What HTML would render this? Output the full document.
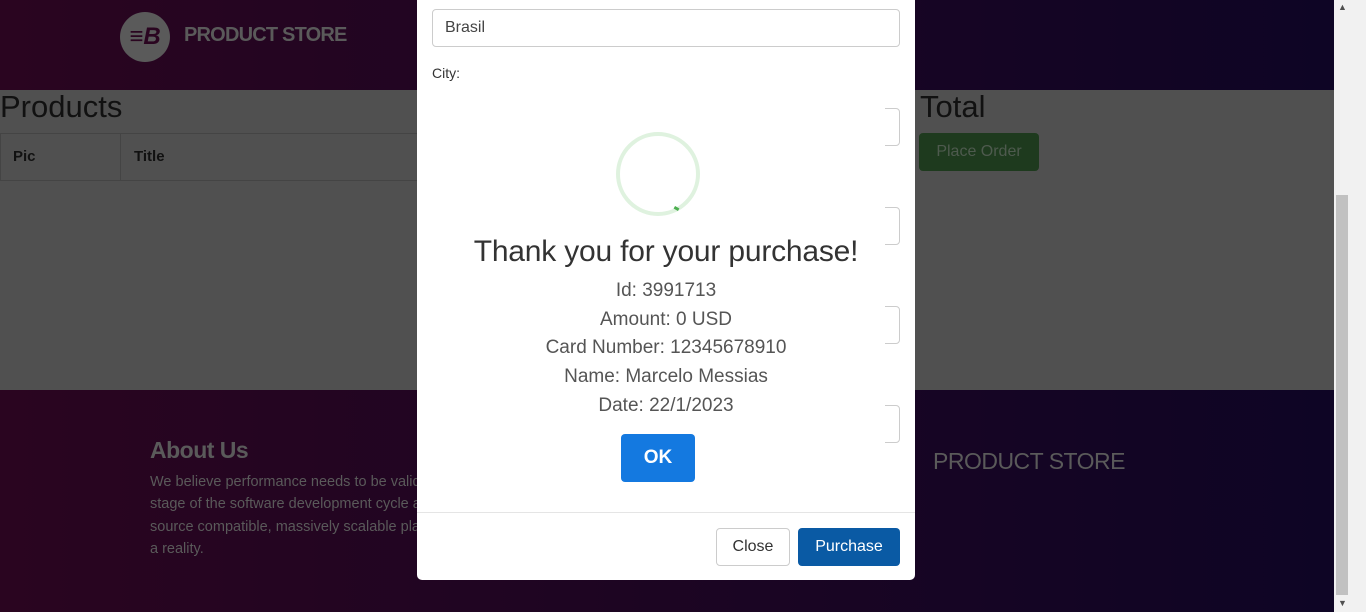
<!DOCTYPE html>
<html><head><style>
*{box-sizing:border-box;margin:0;padding:0}
body{width:1366px;height:612px;overflow:hidden;position:relative;font-family:"Liberation Sans",sans-serif;background:#505050}
.abs{position:absolute}
.hdr{left:0;top:0;width:1334px;height:90px;background:linear-gradient(90deg,#2a0520,#0e0525)}
.ftr{left:0;top:390px;width:1334px;height:222px;background:linear-gradient(90deg,#2a0520,#0e0525)}
.g{color:#5a5a5a}
.inp{border:1px solid #ccc;border-radius:4px;background:#fff}
</style></head><body>
<div class="abs hdr"></div>
<div class="abs" style="left:120px;top:12px;width:50px;height:50px;border-radius:50%;background:#5a5a5a;color:#2a0520;font:italic bold 24px 'Liberation Sans';text-align:center;line-height:50px">&#8801;B</div>
<div class="abs g" style="left:184px;top:24px;font-weight:bold;font-size:20px;letter-spacing:-0.8px">PRODUCT STORE</div>
<div class="abs" style="left:0;top:89px;font-size:31px;color:#111">Products</div>
<div class="abs" style="left:0;top:133px;width:420px;height:48px;border:1px solid #444;border-right:none"></div>
<div class="abs" style="left:120px;top:133px;width:1px;height:48px;background:#444"></div>
<div class="abs" style="left:13px;top:148px;font-size:15px;font-weight:bold;color:#111">Pic</div>
<div class="abs" style="left:134px;top:148px;font-size:15px;font-weight:bold;color:#111">Title</div>
<div class="abs" style="left:920px;top:89px;font-size:31px;color:#111">Total</div>
<div class="abs" style="left:919px;top:133px;width:120px;height:38px;background:#1e3a1e;border-radius:4px;color:#4e5a4e;font-size:16px;text-align:center;line-height:38px">Place Order</div>
<div class="abs ftr"></div>
<div class="abs g" style="left:150px;top:437px;font-size:23px;font-weight:bold;letter-spacing:-0.5px">About Us</div>
<div class="abs g" style="left:150px;top:471px;font-size:14.5px;line-height:22.3px;width:300px;white-space:nowrap">We believe performance needs to be validated<br>stage of the software development cycle and<br>source compatible, massively scalable platform<br>a reality.</div>
<div class="abs g" style="left:933px;top:448px;font-size:23px;letter-spacing:-0.5px">PRODUCT STORE</div>
<div class="abs" style="left:417px;top:0;width:498px;height:580px;background:#fff;border-radius:0 0 5px 5px"></div>
<div class="abs inp" style="left:432px;top:9px;width:468px;height:38px"></div>
<div class="abs" style="left:445px;top:19px;font-size:16px;color:#444">Brasil</div>
<div class="abs" style="left:432px;top:65px;font-size:14px;color:#333">City:</div>
<div class="abs inp" style="left:860px;top:108px;width:40px;height:38px"></div>
<div class="abs inp" style="left:860px;top:207px;width:40px;height:38px"></div>
<div class="abs inp" style="left:860px;top:306px;width:40px;height:38px"></div>
<div class="abs inp" style="left:860px;top:405px;width:40px;height:38px"></div>
<div class="abs" style="left:433px;top:85px;width:452px;height:420px;background:#fff"></div>
<div class="abs" style="left:616px;top:132px;width:84px;height:84px;border-radius:50%;border:4px solid #dff2df"></div>
<div class="abs" style="left:674px;top:207px;width:5px;height:3px;background:#4caf50;transform:rotate(30deg)"></div>
<div class="abs" style="left:417px;top:235px;width:498px;text-align:center;font-size:30px;letter-spacing:-0.2px;color:#333">Thank you for your purchase!</div>
<div class="abs" style="left:417px;top:277px;width:498px;text-align:center;font-size:19px;line-height:28.7px;color:#555">Id: 3991713<br>Amount: 0 USD<br>Card Number: 12345678910<br>Name: Marcelo Messias<br>Date: 22/1/2023</div>
<div class="abs" style="left:621px;top:434px;width:74px;height:48px;background:#1479e0;border-radius:4px;color:#fff;font-size:19px;font-weight:bold;text-align:center;line-height:48px">OK</div>
<div class="abs" style="left:417px;top:512px;width:498px;height:1px;background:#e5e5e5"></div>
<div class="abs" style="left:716px;top:528px;width:74px;height:38px;border:1px solid #ccc;border-radius:4px;text-align:center;line-height:36px;font-size:16px;color:#333">Close</div>
<div class="abs" style="left:798px;top:528px;width:102px;height:38px;background:#0a5aa4;border-radius:4px;text-align:center;line-height:38px;font-size:16px;color:#fff">Purchase</div>
<div class="abs" style="left:1334px;top:0;width:32px;height:612px;background:#f1f1f1"></div>
<div class="abs" style="left:1336px;top:195px;width:12px;height:400px;background:#c1c1c1"></div>
<div class="abs" style="left:1338px;top:2px;font-size:9px;color:#505050">&#9650;</div>
<div class="abs" style="left:1338px;top:598px;font-size:9px;color:#505050">&#9660;</div>
</body></html>
